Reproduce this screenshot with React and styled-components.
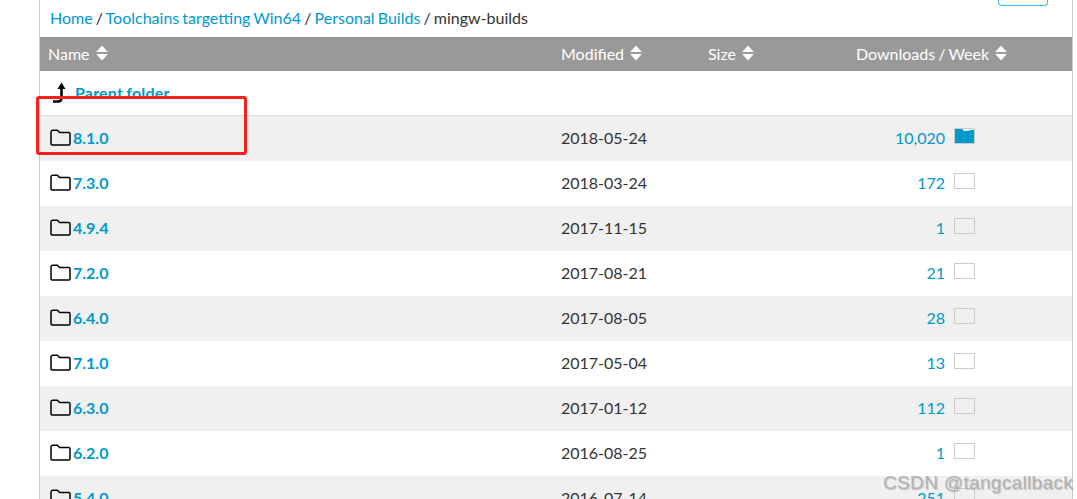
import styled, { createGlobalStyle } from 'styled-components';

const folders = [
    { name: '8.1.0', date: '2018-05-24', count: '10,020', level: 'full' },
    { name: '7.3.0', date: '2018-03-24', count: '172' },
    { name: '4.9.4', date: '2017-11-15', count: '1' },
    { name: '7.2.0', date: '2017-08-21', count: '21' },
    { name: '6.4.0', date: '2017-08-05', count: '28' },
    { name: '7.1.0', date: '2017-05-04', count: '13' },
    { name: '6.3.0', date: '2017-01-12', count: '112' },
    { name: '6.2.0', date: '2016-08-25', count: '1' },
    { name: '5.4.0', date: '2016-07-14', count: '251' },
];

function SortArrows() {
    return (
        <SortIcon viewBox="0 0 12 16">
            <path d="M6 0.5 L11.8 7 L0.2 7 Z" fill="#fff" />
            <path d="M0.2 9 L11.8 9 L6 15.5 Z" fill="#fff" />
        </SortIcon>
    );
}

function FolderIcon() {
    return (
        <FolderSvg viewBox="0 0 21 17">
            <path
                d="M1 3 Q1 1.2 2.6 1.2 L7.4 1.2 L9.6 3.6 L18.6 3.6 Q20 3.6 20 5 L20 14.8 Q20 16 18.8 16 L2.2 16 Q1 16 1 14.8 Z"
                fill="none"
                stroke="#000"
                strokeWidth="1.5"
                strokeLinejoin="round"
            />
        </FolderSvg>
    );
}

function ParentIcon() {
    return (
        <ParentSvg viewBox="0 0 16 21">
            <path d="M1 19.5 L6 19.5 Q9.5 19.5 9.5 16 L9.5 5" fill="none" stroke="#000" strokeWidth="2.6" />
            <path d="M9.5 0.5 L13.5 7 L5.5 7 Z" fill="#000" />
        </ParentSvg>
    );
}

function Spark({ level }) {
    return (
        <SparkBox viewBox="0 0 21 16">
            <rect x="0.5" y="0.5" width="20" height="15" fill="none" stroke="#ccc" />
            {level === 'full' && (
                <path d="M1 1 L8 1 L10 3 L14 3 L17 2 L20 2 L20 15 L1 15 Z" fill="#0099cc" />
            )}
        </SparkBox>
    );
}

export default function App() {
    return (
        <Page>
            <GlobalStyle />
            <Listing>
                <TopBar>
                    <Crumbs>
                        <a>Home</a> / <a>Toolchains targetting Win64</a> / <a>Personal Builds</a> / mingw-builds
                    </Crumbs>
                    <TopButton />
                </TopBar>
                <HeadRow>
                    <HeadCell>Name <SortArrows /></HeadCell>
                    <HeadCell>Modified <SortArrows /></HeadCell>
                    <HeadCell>Size <SortArrows /></HeadCell>
                    <HeadCell>Downloads / Week <SortArrows /></HeadCell>
                </HeadRow>
                <ParentRow>
                    <ParentIcon />
                    <ParentLink>Parent folder</ParentLink>
                </ParentRow>
                {folders.map((f, i) => (
                    <Row key={f.name} $striped={i % 2 === 0}>
                        <NameCell>
                            <FolderIcon />
                            <NameLink>{f.name}</NameLink>
                        </NameCell>
                        <DateCell>{f.date}</DateCell>
                        <span />
                        <CountCell>
                            <Count>{f.count}</Count>
                            <Spark level={f.level} />
                        </CountCell>
                    </Row>
                ))}
            </Listing>
            <Highlight />
            <Watermark>CSDN @tangcallback</Watermark>
        </Page>
    );
}

const GlobalStyle = createGlobalStyle`
    html, body {
        margin: 0;
        background: #fff;
    }
`

const Page = styled.div`
    position: relative;
    height: 499px;
    overflow: hidden;
    padding-left: 39px;
    font-family: Lato, "Open Sans", sans-serif;
    font-size: 16px;
    word-spacing: -1px;
    color: #333;
`

const Listing = styled.div`
    width: 1032px;
    border-left: 1px solid #ccc;
    border-right: 1px solid #ccc;
`

const TopBar = styled.div`
    display: flex;
    justify-content: space-between;
    align-items: flex-start;
    height: 37px;
    padding: 0 24px 0 10px;
`

const Crumbs = styled.div`
    line-height: 35px;
    a {
        color: #0099cc;
    }
`

const TopButton = styled.div`
    width: 48px;
    height: 5px;
    border: 1px solid #33bbee;
    border-top: none;
    border-radius: 0 0 4px 4px;
`

const HeadRow = styled.div`
    display: grid;
    grid-template-columns: 513px 147px 148px 1fr;
    height: 34px;
    padding-bottom: 2px;
    box-sizing: border-box;
    align-items: center;
    background: #999;
    color: #fff;
`

const HeadCell = styled.div`
    display: flex;
    align-items: center;
    gap: 6px;
    padding-left: 8px;
`

const SortIcon = styled.svg`
    width: 12px;
    height: 16px;
`

const ParentRow = styled.div`
    display: flex;
    align-items: center;
    height: 45px;
    padding-left: 12px;
    padding-bottom: 2px;
    box-sizing: border-box;
    border-bottom: 1px solid #ddd;
`

const ParentSvg = styled.svg`
    width: 16px;
    height: 21px;
    margin-right: 7px;
`

const ParentLink = styled.a`
    color: #0099cc;
    font-weight: 700;
    letter-spacing: 0.2px;
`

const Row = styled.div`
    display: grid;
    grid-template-columns: 513px 147px 148px 1fr;
    align-items: center;
    height: 45px;
    padding-bottom: 3px;
    box-sizing: border-box;
    background: ${p => (p.$striped ? '#f0f0f0' : '#fff')};
`

const NameCell = styled.div`
    display: flex;
    align-items: center;
    padding-left: 10px;
    gap: 2px;
`

const FolderSvg = styled.svg`
    width: 21px;
    height: 17px;
`

const NameLink = styled.a`
    color: #0099cc;
    font-weight: 700;
`

const DateCell = styled.div`
    padding-left: 8px;
`

const CountCell = styled.div`
    display: grid;
    grid-template-columns: 97px 21px;
    column-gap: 9px;
    align-items: center;
    justify-content: start;
`

const Count = styled.a`
    color: #0099cc;
    text-align: right;
`

const SparkBox = styled.svg`
    width: 21px;
    height: 16px;
    margin-top: -2px;
`

const Highlight = styled.div`
    position: absolute;
    left: 36px;
    top: 96px;
    width: 205px;
    height: 53px;
    border: 3px solid #f5211c;
    border-radius: 3px;
`

const Watermark = styled.div`
    position: absolute;
    right: 4px;
    top: 472px;
    font-family: "Liberation Sans", Arial, sans-serif;
    font-size: 19px;
    word-spacing: 0;
    letter-spacing: 0.33px;
    color: rgba(170, 170, 170, 0.8);
    text-shadow: 1px 1px 1px rgba(120, 120, 120, 0.4);
    white-space: nowrap;
`
